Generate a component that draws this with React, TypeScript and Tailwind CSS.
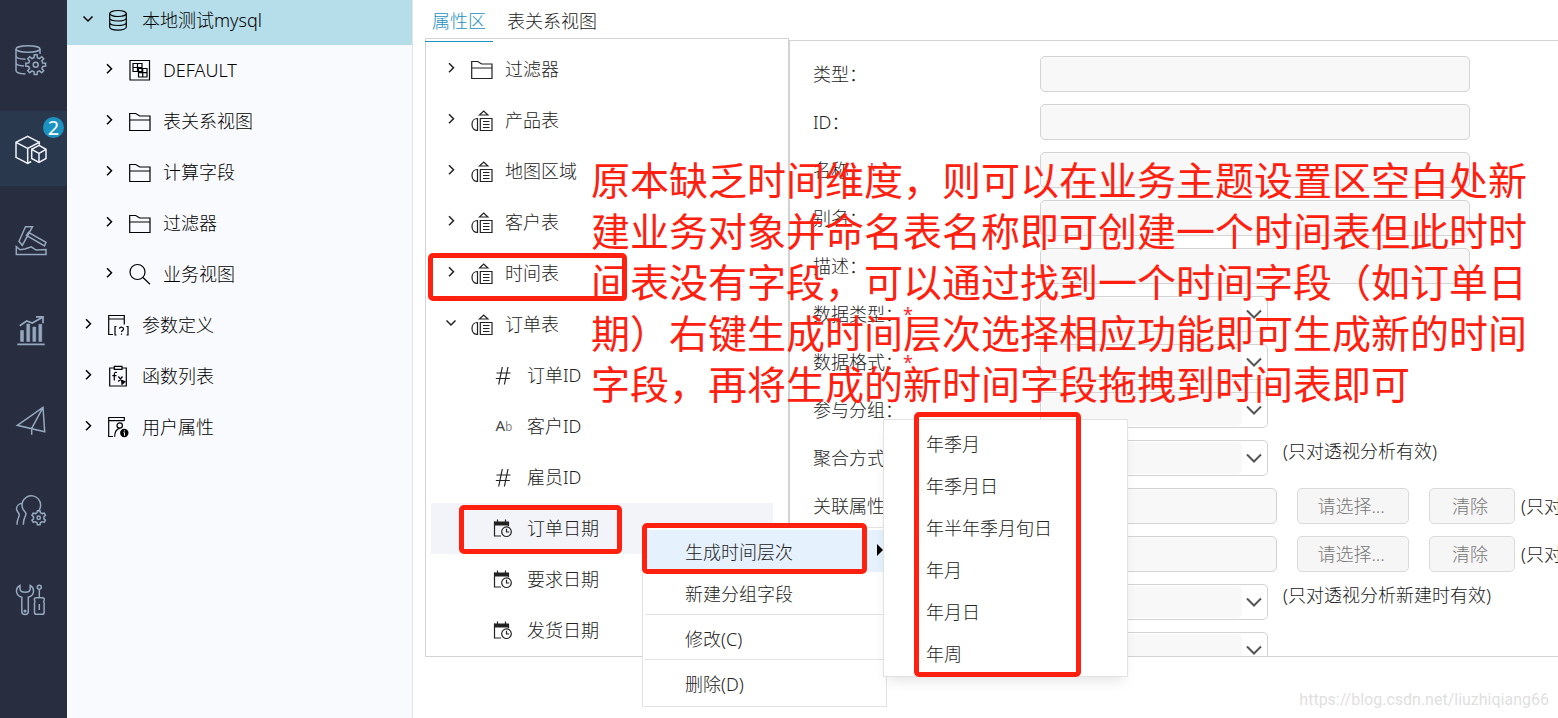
import type { ReactNode } from "react";

type TreeItem = { label: string; icon: ReactNode; level: 1 | 2; open?: boolean };

// outline of a cog wheel around (cx, cy)
function gearPath(cx: number, cy: number, outer: number, inner: number, teeth: number) {
  const points: string[] = [];
  const step = (Math.PI * 2) / teeth;
  for (let i = 0; i < teeth; i++) {
    const a = i * step - Math.PI / 2;
    const corners = [
      [inner, -0.3],
      [outer, -0.18],
      [outer, 0.18],
      [inner, 0.3],
    ];
    for (const [r, k] of corners) {
      points.push(`${(cx + r * Math.cos(a + k * step)).toFixed(2)} ${(cy + r * Math.sin(a + k * step)).toFixed(2)}`);
    }
  }
  return `M${points.join("L")}Z`;
}

function NavIcon({ children }: { children: ReactNode }) {
  return (
    <svg className="w-8 h-8" viewBox="0 0 32 32" fill="none" stroke="currentColor" strokeWidth="1.5" aria-hidden="true">
      {children}
    </svg>
  );
}

function Icon({ children }: { children: ReactNode }) {
  return (
    <svg
      className="w-[22px] h-[22px] shrink-0"
      viewBox="0 0 22 22"
      fill="none"
      stroke="currentColor"
      strokeWidth="1.2"
      aria-hidden="true"
    >
      {children}
    </svg>
  );
}

function Chevron({ open }: { open?: boolean }) {
  return (
    <svg className="w-4 h-4 shrink-0" viewBox="0 0 16 16" fill="none" stroke="currentColor" strokeWidth="1.5" aria-hidden="true">
      <path d={open ? "M3.5 4.5l4.5 4.5 4.5-4.5" : "M6 2.2l4.5 4.5-4.500 4.500"} />
    </svg>
  );
}

const databaseIcon = (
  <Icon>
    <ellipse cx="10" cy="4.5" rx="8.3" ry="3" />
    <path d="M1.7 4.5v13.6c0 1.7 3.7 3 8.3 3s8.3-1.3 8.3-3V4.5M1.7 9c0 1.7 3.7 3 8.3 3s8.3-1.3 8.3-3M1.7 13.5c0 1.7 3.7 3 8.3 3s8.3-1.3 8.3-3" />
  </Icon>
);

const schemaIcon = (
  <Icon>
    <path d="M1 1.500h19.500v19.500H1zM4 4.500h9v8H4zM4 8.500h9M8.500 4.500v8" />
    <path d="M9.500 9.500h8.500v8.500h-8.500zM9.500 13.700h8.500M13.700 9.500v8.500" />
  </Icon>
);

const folderIcon = (
  <Icon>
    <path d="M.7 20.500v-17h6l4 2.500H21v14.500zM.7 10h20.300" />
  </Icon>
);

const searchIcon = (
  <Icon>
    <circle cx="8.500" cy="9" r="7.500" />
    <path d="M14 14.500l7 6.800" />
  </Icon>
);

const paramIcon = (
  <Icon>
    <path d="M5 20.5H.7v-19h15.6v9M.7 5h15.6M8.5 12.5H7v8.5h1.5M18.5 12.5H20V21h-1.5" />
    <path d="M11.5 14.8c0-2.4 4-2.2 4 .1 0 1.5-2 1.6-2 3.2M13.5 19.4v1.3" />
  </Icon>
);

const functionIcon = (
  <Icon>
    <path d="M6 3H1.7v18h16.6V3H14M6.3 1.3h7.7v3H6.3z" />
    <path d="M9 7.5c-2-.6-2.7.3-2.7 2v6M4.3 10.7h4.2M10.3 11.5l4.2 5M14.5 11.5l-4.2 5" />
    <path d="M13 14.5l5 2-4.5 4z" fill="currentColor" stroke="none" />
  </Icon>
);

const userIcon = (
  <Icon>
    <path d="M5 20.5H.7v-19h15.6v3.2M.7 4.7h15.6" />
    <circle cx="11.7" cy="9.5" r="2.7" />
    <path d="M6.7 20.7c0-5 1.5-7.5 5-8.3" />
    <circle cx="16.3" cy="17" r="4.2" fill="currentColor" stroke="none" />
    <path d="M16.3 14.3v1.2M15.5 16.7h1v3" stroke="#fff" strokeWidth="1" />
  </Icon>
);

const objectIcon = (
  <Icon>
    <path d="M8.5 6l4.200-4 4.200 4zM6.500 9.500v12C3.200 21.500 1 19 1 15.500s2.200-6 5.500-6zM9.300 9.500h11.700v12H9.300zM12 12.500h6.500M12 15.500h6.500M12 18.500h6.500" />
  </Icon>
);

const hashIcon = (
  <Icon>
    <path d="M9.3 3L5.700 20.500M15 3l-3.600 17.500M3.500 9h14M2.800 14.500h14" />
  </Icon>
);

const textIcon = (
  <span className="w-[22px] shrink-0 text-[15px] leading-[22px] font-normal text-[#444]" aria-hidden="true">
    A<span className="text-[12px] text-[#888]">b</span>
  </span>
);

const dateIcon = (
  <Icon>
    <path d="M1.500 4.500v14.500h6.500M15.500 5v4" />
    <path d="M1 4.500h15v4H1z" fill="currentColor" stroke="none" />
    <path d="M4.500 2.500v3M12.500 2.500v3" />
    <circle cx="13.500" cy="14.700" r="4.800" />
    <path d="M13.500 11.700v3.300h2.700" />
  </Icon>
);

const modules = [
  {
    name: "数据连接",
    icon: (
      <NavIcon>
        <ellipse cx="13" cy="5" rx="12" ry="3.3" />
        <path d="M1 5v21.5c0 1.9 4 3.2 9.5 3.5M25 5v5M1 12c0 1.8 4 3 9.5 3.2M1 19c0 1.8 3 2.6 8 3" />
        <path d={gearPath(20.7, 20.7, 10, 7.2, 8)} />
        <circle cx="20.7" cy="20.7" r="2.5" />
      </NavIcon>
    ),
  },
  {
    name: "数据准备",
    active: true,
    badge: 2,
    icon: (
      <NavIcon>
        <path d="M24.3 8.3L12.7 2.3 1 8.3v15l11.7 6 3.5-1.8M1 8.3l11.7 6.2 11.6-6.2v2.5M12.7 14.5v14.8" />
        <path d="M24 11.3l-7.3 4v9.2l7.3 4 7-4v-9.2zM16.7 15.3l7.3 4 7-4M24 19.3v9.2" />
      </NavIcon>
    ),
  },
  {
    name: "数据挖掘",
    icon: (
      <NavIcon>
        <path d="M10.5 2.7h7L7.3 21.3 4 17.3zM13.5 8.3l17.5 10-1.5 3.7-18-10.5z" />
        <path d="M1.3 22.7v7.8H31v-5l-10 .5-4.7-3.2L10 25l-5 .8z" />
      </NavIcon>
    ),
  },
  {
    name: "分析展现",
    icon: (
      <NavIcon>
        <path d="M5.5 16.5h3v11h-3zM11.7 10h3v17.5h-3zM17.8 13h3v14.5h-3zM23.8 10.3h3v17.2h-3z" fill="currentColor" strokeWidth="0.5" />
        <path d="M2.3 30.3h27.4M4.7 11.7l7-4.700 5.600 2 10.200-5.800M21 2.800h7v6.500" strokeWidth="1.7" />
      </NavIcon>
    ),
  },
  {
    name: "资源发布",
    icon: (
      <NavIcon>
        <path d="M28 3.3L2.3 21.3l27.4 6.4zM28 3.3L16.7 24.5v6.2" />
      </NavIcon>
    ),
  },
  {
    name: "公共设置",
    icon: (
      <NavIcon>
        <path d="M23.3 17.2A9.3 9.3 0 1 0 7.7 14.5c.8 2 3.3 3.700 3.300 5.500 0 2-2.700 3.500-2.700 10.700M7 9.300c-3 .5-5.500 2.700-5.500 5.500 0 2.500 2.800 4.200 2.800 6.200 0 2-2.300 3.500-2.300 9.700" />
        <path d={gearPath(23.7, 23.7, 7.2, 5.3, 6)} strokeLinejoin="round" />
        <circle cx="23.7" cy="23.7" r="1.7" />
      </NavIcon>
    ),
  },
  {
    name: "系统运维",
    icon: (
      <NavIcon>
        <path d="M5 1.5C2.5 2.8 1.3 5 1.5 7.5c.3 2.8 2.5 5 5.3 5.8v14.2c0 4 6.5 4 6.5 0V13.3c2.8-.8 5-3 5.2-5.8.2-2.5-1-4.7-3.3-6v3.3c0 2-2 3.5-5 3.5s-5.2-1.5-5.2-3.5z" />
        <circle cx="10" cy="27" r="0.8" />
        <circle cx="24.3" cy="3.3" r="2" />
        <path d="M24.3 5.3V13.5M21 13.7h6.6c1.4 0 2 1 1.5 2.3-.6 1-.6 2 0 3v9.5c0 1.2-.6 1.8-1.8 1.8h-6c-1.2 0-1.8-.6-1.8-1.8V19c.6-1 .6-2 0-3-.5-1.3.1-2.3 1.5-2.3zM24.3 20v6" />
      </NavIcon>
    ),
  },
];

const sourceTree: TreeItem[] = [
  { label: "DEFAULT", icon: schemaIcon, level: 2 },
  { label: "表关系视图", icon: folderIcon, level: 2 },
  { label: "计算字段", icon: folderIcon, level: 2 },
  { label: "过滤器", icon: folderIcon, level: 2 },
  { label: "业务视图", icon: searchIcon, level: 2 },
  { label: "参数定义", icon: paramIcon, level: 1 },
  { label: "函数列表", icon: functionIcon, level: 1 },
  { label: "用户属性", icon: userIcon, level: 1 },
];

const subjectTree: TreeItem[] = [
  { label: "过滤器", icon: folderIcon, level: 1 },
  { label: "产品表", icon: objectIcon, level: 1 },
  { label: "地图区域", icon: objectIcon, level: 1 },
  { label: "客户表", icon: objectIcon, level: 1 },
  { label: "时间表", icon: objectIcon, level: 1 },
  { label: "订单表", icon: objectIcon, level: 1, open: true },
];

const fields = [
  { label: "订单ID", icon: hashIcon },
  { label: "客户ID", icon: textIcon },
  { label: "雇员ID", icon: hashIcon },
  { label: "订单日期", icon: dateIcon, selected: true },
  { label: "要求日期", icon: dateIcon },
  { label: "发货日期", icon: dateIcon },
];

const periods = ["年季月", "年季月日", "年半年季月旬日", "年月", "年月日", "年周"];

const note = [
  "原本缺乏时间维度，则可以在业务主题设置区空白处新",
  "建业务对象并命名表名称即可创建一个时间表但此时时",
  "间表没有字段，可以通过找到一个时间字段（如订单日",
  "期）右键生成时间层次选择相应功能即可生成新的时间",
  "字段，再将生成的新时间字段拖拽到时间表即可",
];

function FormRow({ id, label, required, children }: { id: string; label?: string; required?: boolean; children: ReactNode }) {
  return (
    <div className="flex items-start h-9 shrink-0 whitespace-nowrap">
      <label htmlFor={id} className="w-[227px] shrink-0 leading-9">
        {label}
        {required && <span className="font-normal text-red-500">*</span>}
      </label>
      {children}
    </div>
  );
}

function TextField({ id, short, name }: { id: string; short?: boolean; name?: string }) {
  return (
    <input
      id={id}
      type="text"
      aria-label={name}
      readOnly
      className={`h-9 shrink-0 rounded-[5px] border border-[#d3d3d3] bg-[#f8f8f8] px-2 outline-none ${
        short ? "w-[237px]" : "w-[430px]"
      }`}
    />
  );
}

function SelectField({ id, name }: { id: string; name?: string }) {
  return (
    <div className="flex items-center w-[228px] h-9 shrink-0 rounded-[5px] border border-[#d3d3d3] bg-white p-px">
      <select id={id} aria-label={name} className="flex-1 h-full appearance-none rounded-[5px] bg-[#f8f8f8] outline-none" />
      <svg className="w-6 h-4" viewBox="0 0 24 16" fill="none" stroke="#555" strokeWidth="2" aria-hidden="true">
        <path d="M5 4.500l7 7 7-7" />
      </svg>
    </div>
  );
}

function PickerButtons() {
  return (
    <>
      <button className="ml-5 w-28 h-9 shrink-0 rounded-[5px] border border-[#dadada] bg-[#f6f6f6] pr-1 text-[#777]">请选择...</button>
      <button className="ml-5 w-[86px] h-9 shrink-0 rounded-[5px] border border-[#dadada] bg-[#f6f6f6] pr-1 text-[#777]">清除</button>
      <span className="ml-[6px] leading-9">(只对透视分析有效)</span>
    </>
  );
}

function PropertyForm() {
  return (
    <form className="flex-1 min-w-0 mt-[2px] flex flex-col gap-3 overflow-hidden border border-r-0 border-[#d3d3d3] pt-[15px] pl-[23px] text-[#222]">
      <FormRow id="type" label="类型："><TextField id="type" /></FormRow>
      <FormRow id="oid" label="ID："><TextField id="oid" /></FormRow>
      <FormRow id="name" label="名称：" required><TextField id="name" /></FormRow>
      <FormRow id="alias" label="别名："><TextField id="alias" /></FormRow>
      <FormRow id="desc" label="描述："><TextField id="desc" /></FormRow>
      <FormRow id="dataType" label="数据类型：" required><SelectField id="dataType" /></FormRow>
      <FormRow id="format" label="数据格式：" required><SelectField id="format" /></FormRow>
      <FormRow id="group" label="参与分组："><SelectField id="group" /></FormRow>
      <FormRow id="agg" label="聚合方式：">
        <SelectField id="agg" />
        <span className="ml-[15px] leading-[22px]">(只对透视分析有效)</span>
      </FormRow>
      <FormRow id="related" label="关联属性：">
        <TextField id="related" short />
        <PickerButtons />
      </FormRow>
      <FormRow id="sortBy">
        <TextField id="sortBy" short name="排序属性" />
        <PickerButtons />
      </FormRow>
      <FormRow id="defaultSort">
        <SelectField id="defaultSort" name="默认排序" />
        <span className="ml-[15px] leading-[22px]">(只对透视分析新建时有效)</span>
      </FormRow>
      <FormRow id="mask"><SelectField id="mask" name="脱敏规则" /></FormRow>
    </form>
  );
}

function ContextMenu() {
  return (
    <div role="menu" className="absolute left-[642px] top-[527px] w-[245px] border border-[#e2e2e2] bg-white p-[2px] text-[#222]">
      <button role="menuitem" className="flex items-center justify-between w-full h-[42px] pl-10 pt-[2px] bg-[#e5f1fd]">
        生成时间层次
        <svg className="w-2 h-3 mb-1" viewBox="0 0 8 12" aria-hidden="true">
          <path d="M1 0l6 6-6 6z" fill="#000" />
        </svg>
      </button>
      <button role="menuitem" className="flex items-center w-full h-[42px] pl-10 pt-[2px]">新建分组字段</button>
      <hr className="border-[#e2e2e2] mb-[2px]" />
      <button role="menuitem" className="flex items-center w-full h-[42px] pl-10 pt-[2px]">修改(C)</button>
      <hr className="border-[#e2e2e2] mb-[2px]" />
      <button role="menuitem" className="flex items-center w-full h-[42px] pl-10 pt-[2px]">删除(D)</button>

      {/* submenu */}
      <div
        role="menu"
        className="absolute left-[240px] -top-[109px] w-[245px] border border-[#e2e2e2] bg-white p-[2px] shadow-[0_8px_12px_-4px_rgba(0,0,0,0.1)]"
      >
        {periods.map((p) => (
          <button key={p} role="menuitem" className="flex items-center w-full h-[42px] pl-10 pt-[2px]">
            {p}
          </button>
        ))}
      </div>
    </div>
  );
}

export default function App() {
  return (
    <div className="relative flex h-screen overflow-hidden bg-white font-['Noto_Sans','Noto_Sans_CJK_SC',sans-serif] text-[18px] leading-6 font-light text-black">
      {/* Modules */}
      <nav className="flex flex-col gap-[15px] w-[67px] shrink-0 pt-[21px] bg-[#292d40] text-[#94a9be]">
        {modules.map((m) => (
          <a
            key={m.name}
            href="#"
            aria-label={m.name}
            className={`relative flex items-center h-[75px] pl-[15px] pt-[3px] ${m.active ? "bg-[#2a384e] text-[#eef2f8]" : ""}`}
          >
            {m.icon}
            {m.badge && (
              <span className="absolute left-[43px] top-[6px] w-[21px] h-[21px] rounded-full bg-[#1c92c0] text-center text-[20px] leading-[21px] font-normal text-white">
                {m.badge}
              </span>
            )}
          </a>
        ))}
      </nav>

      {/* Source tree */}
      <aside className="w-[346px] shrink-0 border-r border-[#e4e4e4] bg-[#f9fafd]">
        <button className="flex items-center gap-3 w-full h-[45px] pb-[6px] pl-[13px] bg-[#b6ddea]">
          <Chevron open />
          {databaseIcon}
          本地测试mysql
        </button>
        <ul>
          {sourceTree.map((item) => (
            <li key={item.label}>
              <button className={`flex items-center gap-3 w-full h-[51px] pb-px ${item.level === 2 ? "pl-[34px]" : "pl-[13px]"}`}>
                <Chevron />
                {item.icon}
                {item.label}
              </button>
            </li>
          ))}
        </ul>
      </aside>

      <main className="flex-1 min-w-0 flex flex-col pl-3">
        <div role="tablist" className="relative z-10 flex gap-[7px] h-[38px] shrink-0">
          <button role="tab" aria-selected="true" className="h-[42px] px-[7px] border-b border-[#1c92c0] text-[#1c8fc0]">属性区</button>
          <button role="tab" aria-selected="false" className="h-[42px] px-[7px] border-b border-transparent text-[#222]">表关系视图</button>
        </div>

        <div className="flex-1 min-h-0 flex">
          <ul className="w-[364px] shrink-0 overflow-hidden border border-[#d3d3d3] pt-[5px] pl-[5px] pr-[15px] text-[#222]">
            {subjectTree.map((item) => (
              <li key={item.label}>
                <button className="flex items-center gap-3 w-full h-[51px] pb-px pl-3">
                  <Chevron open={item.open} />
                  {item.icon}
                  {item.label}
                </button>
              </li>
            ))}
            {fields.map((f) => (
              <li key={f.label}>
                <button className={`flex items-center gap-3 w-full h-[51px] pb-px pl-[62px] ${f.selected ? "bg-[#f3f4f9]" : ""}`}>
                  {f.icon}
                  {f.label}
                </button>
              </li>
            ))}
          </ul>
          <PropertyForm />
        </div>

        <footer className="h-[61px] shrink-0 pt-[31px] pr-[9px] text-right font-[Roboto,sans-serif] text-[16px] font-normal text-[#dfdfdf]">
          https://blog.csdn.net/liuzhiqiang66
        </footer>
      </main>

      <ContextMenu />

      {/* Annotations */}
      <div className="pointer-events-none">
        <div className="absolute left-[428px] top-[253px] w-[199px] h-12 rounded-[5px] border-5 border-[#ff2010]" />
        <div className="absolute left-[459px] top-[505px] w-[163px] h-[49px] rounded-[5px] border-5 border-[#ff2010]" />
        <div className="absolute left-[642px] top-[523px] w-[225px] h-[51px] rounded-[5px] border-5 border-[#ff2010]" />
        <div className="absolute left-[914px] top-[412px] w-[167px] h-[265px] rounded-[5px] border-5 border-[#ff2010]" />
        <p className="absolute left-[591px] top-[154px] whitespace-nowrap text-[39px] leading-[51px] font-normal text-[#ff2010]">
          {note.map((line) => (
            <span key={line} className="block">
              {line}
            </span>
          ))}
        </p>
      </div>
    </div>
  );
}
